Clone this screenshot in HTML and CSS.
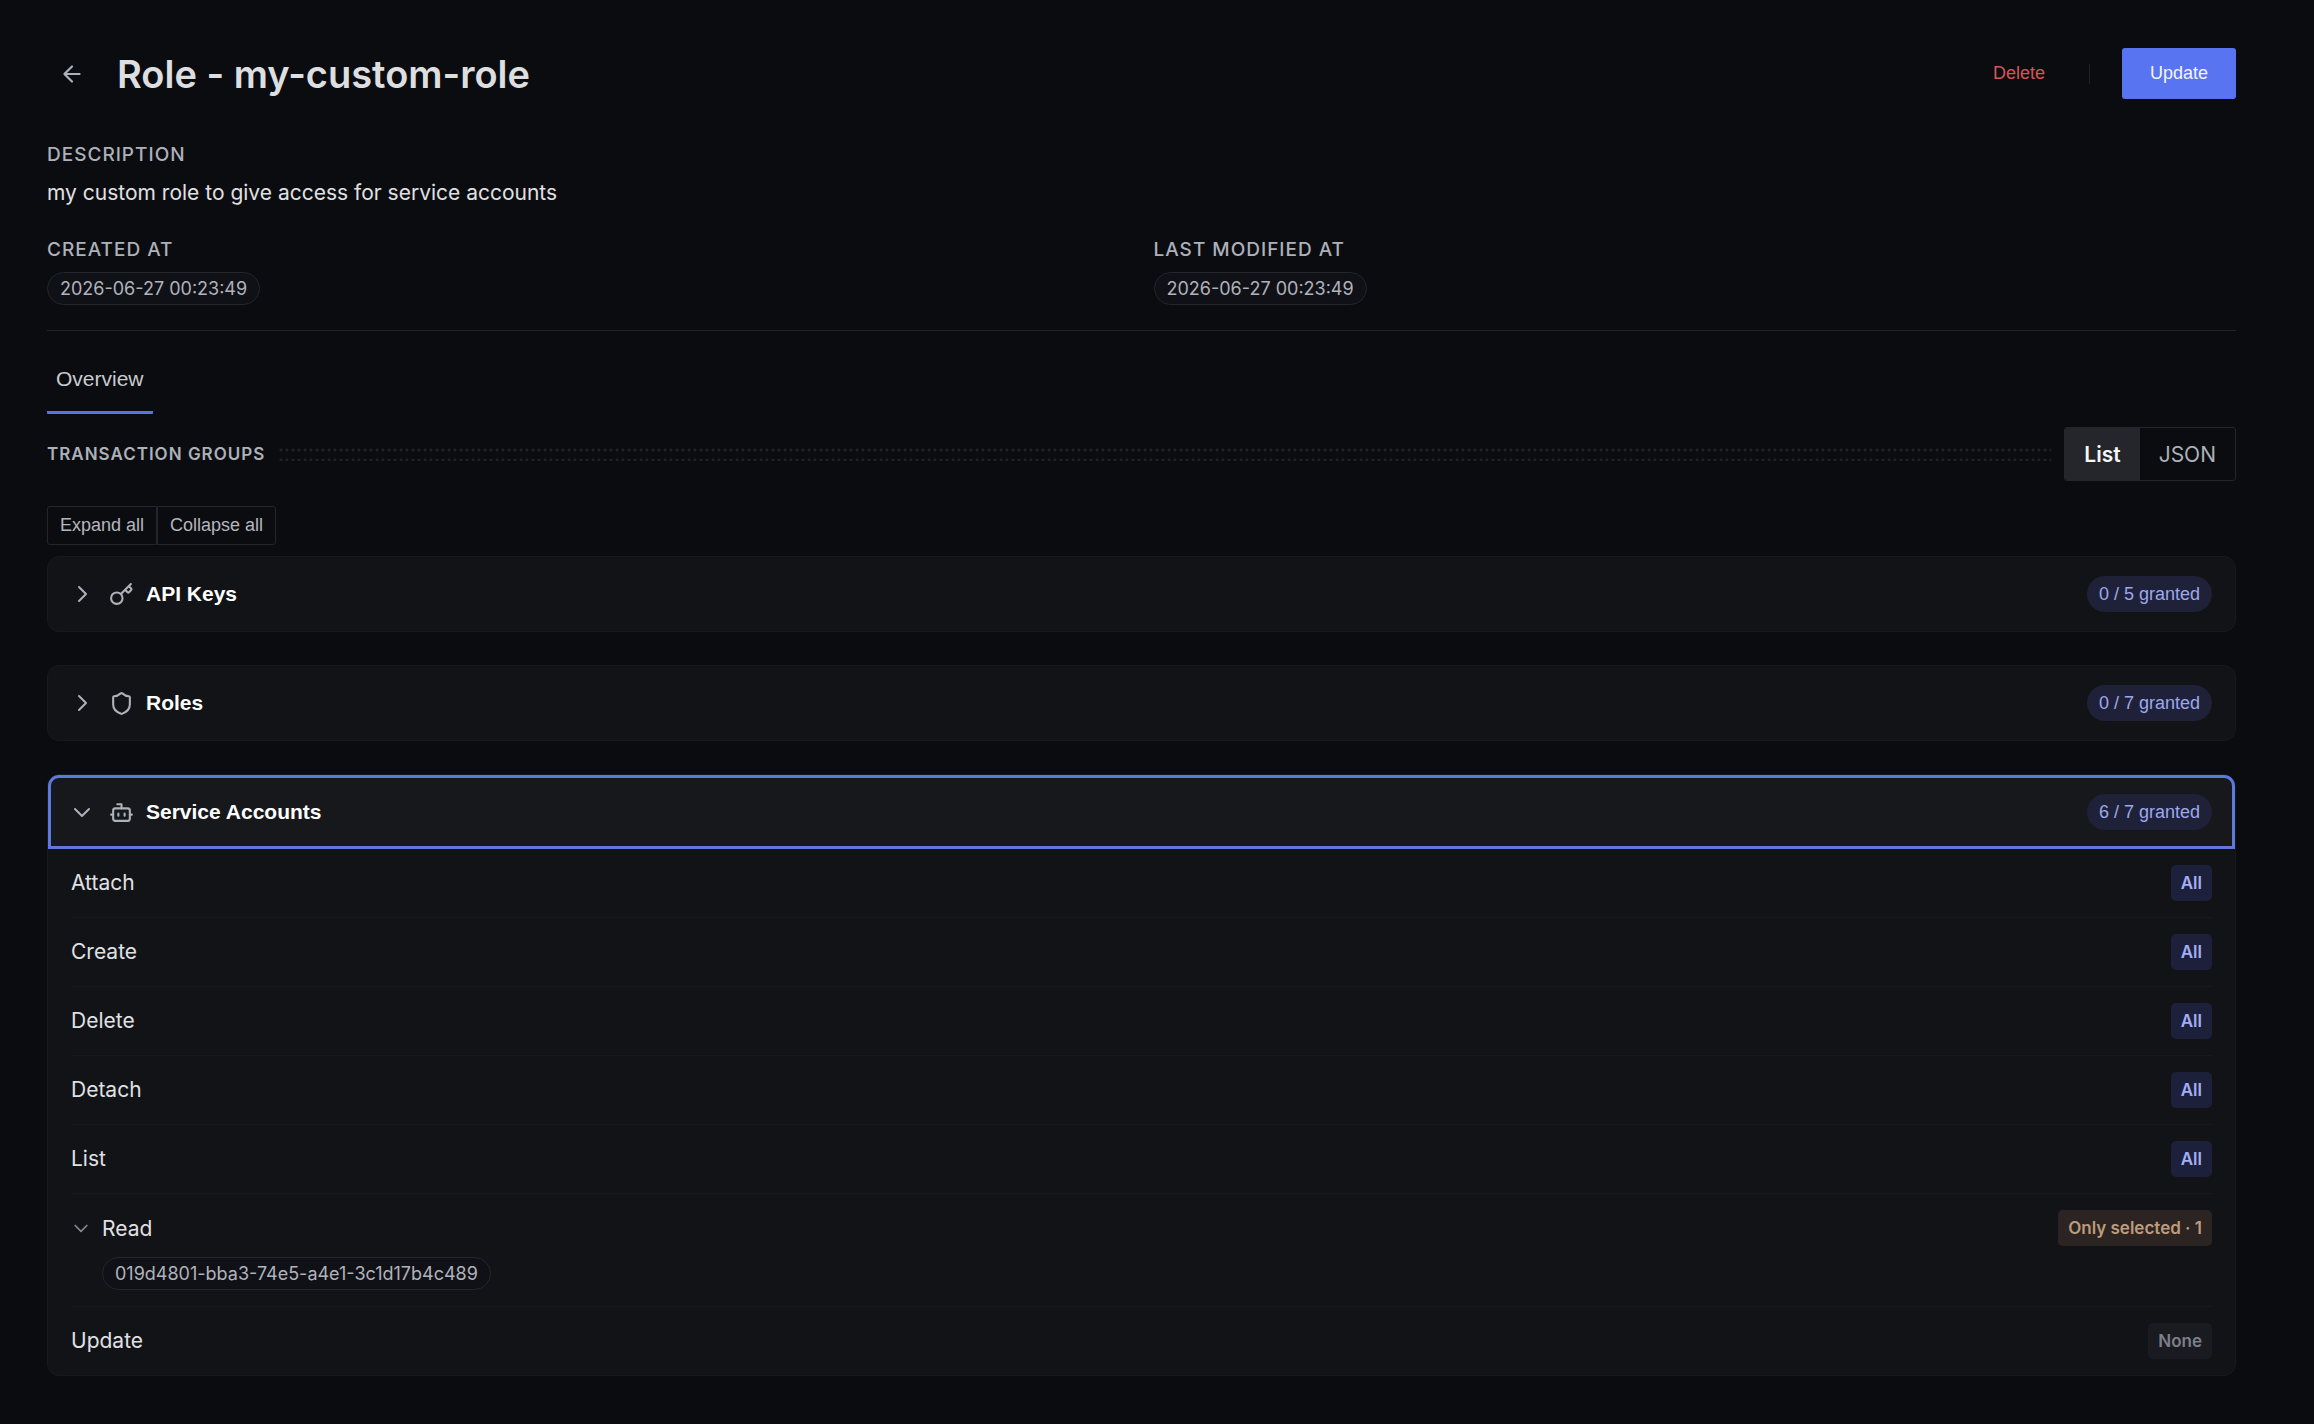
FILE: index.html
```
<!DOCTYPE html>
<html lang="en">
<head>
    <meta charset="UTF-8">
    <meta name="viewport" content="width=device-width, initial-scale=1.0">
    <title>Role - my-custom-role</title>
    <link rel="stylesheet" href="styles.css">
</head>
<body>

<main class="page">
    <header class="page-header">
        <button class="back-btn" aria-label="Back">
            <svg class="icon" width="26" height="26" viewBox="0 0 24 24"><path d="m12 19-7-7 7-7M19 12H5"/></svg>
        </button>
        <h1>Role - my-custom-role</h1>
        <div class="header-actions">
            <button class="delete-btn">Delete</button>
            <span class="separator"></span>
            <button class="update-btn">Update</button>
        </div>
    </header>

    <section class="details">
        <div class="field field-wide">
            <h2 class="label">Description</h2>
            <p class="description">my custom role to give access for service accounts</p>
        </div>
        <div class="field">
            <h2 class="label">Created At</h2>
            <span class="pill">2026-06-27 00:23:49</span>
        </div>
        <div class="field">
            <h2 class="label">Last Modified At</h2>
            <span class="pill">2026-06-27 00:23:49</span>
        </div>
    </section>

    <nav class="tabs">
        <button class="tab active">Overview</button>
    </nav>

    <div class="groups-header">
        <h2 class="groups-title">Transaction Groups</h2>
        <div class="dots"></div>
        <div class="view-toggle">
            <button class="view-btn active">List</button>
            <button class="view-btn">JSON</button>
        </div>
    </div>

    <div class="expand-controls">
        <button class="expand-btn">Expand all</button>
        <button class="expand-btn">Collapse all</button>
    </div>

    <div class="groups">
        <section class="card">
            <button class="card-header">
                <svg class="icon" width="24" height="24" viewBox="0 0 24 24"><path d="m9 5 7 7-7 7"/></svg>
                <svg class="icon group-icon" width="25" height="25" viewBox="0 0 24 24"><path d="m15.500 7.500 2.300 2.300a1 1 0 0 0 1.400 0l2.100-2.100a1 1 0 0 0 0-1.400L19 4M21 2l-9.600 9.600"/><circle cx="7.500" cy="15.500" r="5.500"/></svg>
                <span class="card-title">API Keys</span>
                <span class="granted">0 / 5 granted</span>
            </button>
        </section>

        <section class="card">
            <button class="card-header">
                <svg class="icon" width="24" height="24" viewBox="0 0 24 24"><path d="m9 5 7 7-7 7"/></svg>
                <svg class="icon group-icon" width="25" height="25" viewBox="0 0 24 24"><path d="M20 13c0 5-3.500 7.500-7.660 8.950a1 1 0 0 1-.67-.01C7.500 20.500 4 18 4 13V6a1 1 0 0 1 1-1c2 0 4.500-1.200 6.240-2.720a1.170 1.170 0 0 1 1.520 0C14.510 3.810 17 5 19 5a1 1 0 0 1 1 1z"/></svg>
                <span class="card-title">Roles</span>
                <span class="granted">0 / 7 granted</span>
            </button>
        </section>

        <section class="card open">
            <button class="card-header">
                <svg class="icon" width="24" height="24" viewBox="0 0 24 24"><path d="m5 9 7 7 7-7"/></svg>
                <svg class="icon group-icon" width="25" height="25" viewBox="0 0 24 24"><path d="M12 8V4H8M2 14h2M20 14h2M15 13v2M9 13v2"/><rect width="16" height="12" x="4" y="8" rx="2"/></svg>
                <span class="card-title">Service Accounts</span>
                <span class="granted">6 / 7 granted</span>
            </button>
            <ul class="rows">
                <li class="row"><span>Attach</span><span class="badge all">All</span></li>
                <li class="row"><span>Create</span><span class="badge all">All</span></li>
                <li class="row"><span>Delete</span><span class="badge all">All</span></li>
                <li class="row"><span>Detach</span><span class="badge all">All</span></li>
                <li class="row"><span>List</span><span class="badge all">All</span></li>
                <li class="row">
                    <button class="row-toggle">
                        <svg class="icon" width="20" height="20" viewBox="0 0 24 24"><path d="m5 9 7 7 7-7"/></svg>
                        Read
                    </button>
                    <span class="badge selected">Only selected · 1</span>
                    <div class="row-items">
                        <span class="pill">019d4801-bba3-74e5-a4e1-3c1d17b4c489</span>
                    </div>
                </li>
                <li class="row"><span>Update</span><span class="badge none">None</span></li>
            </ul>
        </section>
    </div>
</main>

</body>
</html>
```
FILE: styles.css
```
* {
    box-sizing: border-box;
}

body {
    margin: 0;
    background-color: #0b0c0f;
    color: #e0e1e4;
    font-family: Inter, sans-serif;
    font-size: 21px;
    line-height: 32px;
}

h1, h2, p, ul {
    margin: 0;
    padding: 0;
}

button {
    margin: 0;
    padding: 0;
    border: none;
    background: none;
    color: inherit;
    font-family: "Liberation Sans", Arial, sans-serif;
    cursor: pointer;
}

.icon {
    flex-shrink: 0;
    fill: none;
    stroke: #adb1ba;
    stroke-width: 2;
    stroke-linecap: round;
    stroke-linejoin: round;
}

.page {
    padding: 48px 78px 48px 47px;
}

/* Header */
.page-header {
    display: flex;
    align-items: center;
    height: 51px;
}

.back-btn {
    display: flex;
    padding: 12px;
    margin-right: 20px;
}

h1 {
    font-size: 38px;
    font-weight: 600;
    line-height: 48px;
    color: #dddee0;
}

.header-actions {
    display: flex;
    align-items: center;
    margin-left: auto;
}

.delete-btn {
    font-size: 18px;
    color: #d35755;
}

.separator {
    width: 1px;
    height: 20px;
    margin: 0 32px 0 44px;
    background-color: #202227;
}

.update-btn {
    height: 51px;
    padding: 0 28px;
    border-radius: 3px;
    background-color: #5874f0;
    color: #f4f5fc;
    font-size: 18px;
}

/* Role details */
.details {
    display: grid;
    grid-template-columns: 1fr 1fr;
    gap: 26px 24px;
    padding: 41px 0 25px;
    border-bottom: 1px solid #202227;
}

.field {
    display: flex;
    flex-direction: column;
    align-items: flex-start;
    gap: 7px;
}

.field-wide {
    grid-column: 1 / -1;
}

.label {
    font-size: 19px;
    font-weight: 500;
    line-height: 30px;
    letter-spacing: 1px;
    text-transform: uppercase;
    color: #adb1ba;
}

.pill {
    display: block;
    width: fit-content;
    padding: 0 12px;
    border: 1px solid #24262b;
    border-radius: 17px;
    background-color: #101116;
    color: #b0b3bc;
    font-size: 18px;
    line-height: 31px;
}

/* Tabs */
.tabs {
    display: flex;
    padding-top: 16px;
}

.tab {
    height: 67px;
    padding: 0 9px;
    border-bottom: 3px solid #5874e0;
    border-radius: 1px;
    color: #c9cbd0;
    font-size: 21px;
}

/* Transaction groups */
.groups-header {
    display: flex;
    align-items: center;
    gap: 13px;
    margin-top: 13px;
}

.groups-title {
    font-size: 17px;
    font-weight: 600;
    letter-spacing: 1px;
    text-transform: uppercase;
    color: #adb1ba;
}

.dots {
    flex: 1;
    height: 13px;
    background-image: radial-gradient(circle, #202227 1px, transparent 2px);
    background-size: 6px 10px;
    background-position: 0 -3px;
}

.view-toggle {
    display: flex;
    height: 54px;
    border: 1px solid #24262b;
    border-radius: 3px;
    overflow: hidden;
}

.view-btn {
    padding: 0 19px;
    color: #adb1ba;
    font-family: Inter, sans-serif;
    font-size: 21px;
}

.view-btn.active {
    background-color: #25262b;
    color: #f4f5f7;
    font-weight: 600;
}

.expand-controls {
    display: flex;
    margin-top: 25px;
}

.expand-btn {
    height: 39px;
    padding: 0 12px;
    border: 1px solid #24262b;
    color: #b3b6bd;
    font-size: 18px;
}

.expand-btn:first-child {
    border-radius: 3px 0 0 3px;
}

.expand-btn:last-child {
    border-radius: 0 3px 3px 0;
}

.groups {
    display: flex;
    flex-direction: column;
    gap: 33px;
    margin-top: 11px;
}

.card {
    border: 1px solid #18191d;
    border-radius: 12px;
    background-color: #121317;
}

.card-header {
    display: flex;
    align-items: center;
    width: 100%;
    height: 74px;
    padding: 0 23px 0 22px;
    border-radius: 11px;
}

.group-icon {
    margin: 0 12px 0 15px;
}

.card-title {
    color: #fff;
    font-size: 21px;
    font-weight: 700;
}

.granted {
    margin-left: auto;
    padding: 0 12px;
    border-radius: 18px;
    background-color: #1e2138;
    color: #9da8ee;
    font-size: 18px;
    line-height: 36px;
}

/* Expanded card */
.open .card-header {
    border-radius: 11px 11px 0 0;
    background-color: #17181c;
    outline: 3px solid #5f78de;
    outline-offset: -3px;
}

.rows {
    padding: 0 23px;
    list-style: none;
}

.row {
    display: grid;
    grid-template-columns: 1fr auto;
    align-items: center;
    padding: 16px 0;
    border-bottom: 1px solid #18191d;
}

.row:last-child {
    border-bottom: none;
}

.badge {
    padding: 0 10px;
    border-radius: 5px;
    font-size: 17px;
    font-weight: 600;
    line-height: 36px;
}

.badge.all {
    background-color: #1c203a;
    color: #a3aef5;
}

.badge.selected {
    background-color: #2b2422;
    color: #bd9c7c;
}

.badge.none {
    background-color: #1a1b20;
    color: #7b7f8a;
}

.row-toggle {
    display: flex;
    align-items: center;
    gap: 11px;
    font-family: Inter, sans-serif;
    font-size: 21px;
}

.row-toggle .icon {
    stroke: #858993;
}

.row-items {
    grid-column: 1 / -1;
    padding: 11px 0 0 31px;
}
```
